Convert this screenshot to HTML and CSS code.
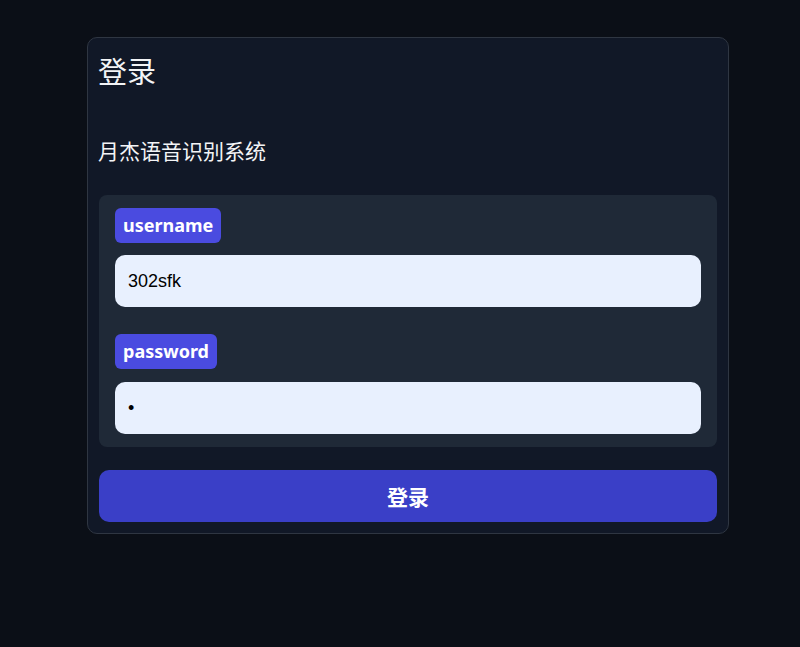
FILE: index.html
```html
<!DOCTYPE html>
<html lang="zh-CN">
<head>
  <meta charset="UTF-8" />
  <meta name="viewport" content="width=device-width, initial-scale=1.0"/>
  <title>登录</title>
  <link rel="stylesheet" href="styles.css">
</head>
<body>
  <div class="page">
    <div class="card">
      <h1 class="title">登录</h1>
      <p class="subtitle">月杰语音识别系统</p>

      <div class="panel">
        <label class="badge" for="username">username</label>
        <input class="field" type="text" id="username" value="302sfk"/>

        <label class="badge badge-gap" for="password">password</label>
        <input class="field field-last" type="password" id="password" value="1"/>
      </div>

      <button class="submit">登录</button>
    </div>
  </div>
</body>
</html>
```

FILE: styles.css
```css
body {
  margin: 0;
  background: #0b0f17;
  font-family: "Noto Sans", "Noto Sans CJK SC", sans-serif;
  color: #f3f4f6;
}
.page {
  padding: 37px 0 0 87px;
}
.card {
  width: 618px;
  background: #111827;
  border: 1px solid #2f3642;
  border-radius: 10px;
  padding: 11px 11px 11px 11px;
}
.title {
  margin: 0 0 0 -1px;
  font-size: 29px;
  font-weight: normal;
  line-height: 46px;
}
.subtitle {
  margin: 41px 0 0 -1px;
  font-size: 21px;
  line-height: 30px;
}
.panel {
  margin-top: 29px;
  background: #1f2937;
  border-radius: 8px;
  padding: 13px 16px 13px 16px;
}
.badge {
  display: inline-block;
  background: #4a4be0;
  color: #fff;
  font-weight: bold;
  font-size: 18px;
  line-height: 35px;
  padding: 0 8px;
  border-radius: 6px;
}
.badge-gap {
  margin-top: 27px;
}
.field {
  display: block;
  box-sizing: border-box;
  width: 100%;
  height: 52px;
  margin-top: 12px;
  border: none;
  border-radius: 10px;
  background: #e8f0fe;
  padding: 0 13px;
  font-family: "Liberation Sans", Arial, sans-serif;
  font-size: 18px;
  color: #000;
  outline: none;
}
.field-last {
  margin-top: 13px;
}
.submit {
  display: block;
  width: 100%;
  height: 52px;
  margin-top: 23px;
  border: none;
  border-radius: 10px;
  background: #3a3fc7;
  color: #fff;
  font-family: "Noto Sans CJK SC", sans-serif;
  font-weight: bold;
  font-size: 21px;
}
```
